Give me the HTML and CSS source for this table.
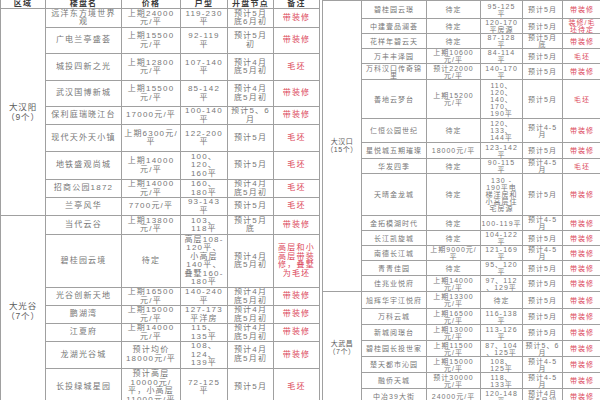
FILE: index.html
```html
<!DOCTYPE html>
<html lang="zh">
<head>
<meta charset="utf-8">
<link rel="stylesheet" href="styles.css">
</head>
<body>
<div class="page">
<table class="tbl left">
<colgroup><col class="l1"><col class="l2"><col class="l3"><col class="l4"><col class="l5"><col class="l6"></colgroup>
<tr class="head"><th>区域</th><th>楼盘名</th><th>价格</th><th>户型</th><th>开盘节点</th><th>备注</th></tr>
<tr class="h19"><td rowspan="9" class="region">大汉阳<br>（9个）</td><td>远洋东方境世界<br>观</td><td>上期24000<br>元/平</td><td>119-230<br>平</td><td>预计5月<br>底6月初</td><td class="red">带装修</td></tr>
<tr class="h26"><td>广电兰亭盛荟</td><td>上期15500<br>元/平</td><td>92-119<br>平</td><td>预计5月<br>初</td><td class="red">带装修</td></tr>
<tr class="h27"><td>城投四新之光</td><td>上期12800<br>元/平</td><td>107-140<br>平</td><td>预计4月<br>底5月初</td><td class="red">毛坯</td></tr>
<tr class="h26"><td>武汉国博新城</td><td>上期15500<br>元/平</td><td>85-142<br>平</td><td>预计4月<br>底5月初</td><td class="red">带装修</td></tr>
<tr class="h17"><td>保利庭瑞晓江台</td><td>17000元/平</td><td>100-140<br>平</td><td>预计5、6<br>月</td><td class="red">带装修</td></tr>
<tr class="h27"><td>现代天外天小镇</td><td>上期6300元/<br>平</td><td>122-200<br>平</td><td>预计5月</td><td class="red">毛坯</td></tr>
<tr class="h28"><td>地铁盛观尚城</td><td>上期14000<br>元/平</td><td>100、<br>120、<br>160平</td><td>预计5月</td><td class="red">毛坯</td></tr>
<tr class="h17"><td>招商公园1872</td><td>上期14000<br>元/平</td><td>160、<br>180平</td><td>预计4月<br>底5月初</td><td class="red">毛坯</td></tr>
<tr class="h18"><td>兰亭风华</td><td>7700元/平</td><td>93-143<br>平</td><td>预计5月</td><td class="red">毛坯</td></tr>
<tr class="h19 sep"><td rowspan="7" class="region">大光谷<br>（7个）</td><td>当代云谷</td><td>上期13800<br>元/平</td><td>103、<br>118平</td><td>预计5月<br>底</td><td class="red">带装修</td></tr>
<tr class="h53"><td>碧桂园云境</td><td>待定</td><td>高层108-<br>120平、<br>小高层<br>140平、<br>叠墅160-<br>180平</td><td>预计4月<br>底5月初</td><td class="red">高层和小<br>高层带装<br>修，叠墅<br>为毛坯</td></tr>
<tr class="h17"><td>光谷创新天地</td><td>上期16500<br>元/平</td><td>140-240<br>平</td><td>预计4月<br>底5月初</td><td class="red">带装修</td></tr>
<tr class="h18"><td>鹏湖湾</td><td>上期15000<br>元/平</td><td>127-173<br>平洋房</td><td>预计4月<br>底5月初</td><td class="red">带装修</td></tr>
<tr class="h18"><td>江夏府</td><td>上期14000<br>元/平</td><td>115、<br>135平</td><td>预计4月<br>底5月初</td><td class="red">带装修</td></tr>
<tr class="h26"><td>龙湖光谷城</td><td>预计均价<br>18000元/平</td><td>108、<br>124、<br>139平</td><td>预计4月<br>底5月初</td><td class="red">带装修</td></tr>
<tr class="h38"><td>长投绿城星园</td><td>预计高层<br>10000元/<br>平，小高层<br>11000元/平</td><td>72-125<br>平</td><td>预计5月</td><td class="red">毛坯</td></tr>
</table>

<table class="tbl right">
<colgroup><col class="r1"><col class="r2"><col class="r3"><col class="r4"><col class="r5"><col class="r6"></colgroup>
<tr class="h18"><td rowspan="15" class="region">大汉口<br>（15个）</td><td>碧桂园云璟</td><td>待定</td><td>95-125<br>平</td><td>预计5月</td><td class="red">带装修</td></tr>
<tr class="h15"><td>中建壹品澜荟</td><td>待定</td><td>120-170<br>平房源</td><td>预计5月</td><td class="red">装修/毛<br>坯待定</td></tr>
<tr class="h15"><td>花样年碧云天</td><td>待定</td><td>87-128<br>平</td><td>预计5月<br>底</td><td class="red">带装修</td></tr>
<tr class="h15"><td>万丰丰泽园</td><td>上期10600<br>元/平</td><td>84-114<br>平</td><td>预计5月</td><td class="red">毛坯</td></tr>
<tr class="h16"><td>万科汉口传奇锦<br>里</td><td>预计22000<br>元/平</td><td>140-170<br>平</td><td>预计5月</td><td class="red">带装修</td></tr>
<tr class="h39"><td>善地云梦台</td><td>上期15200<br>元/平</td><td>110、<br>120、<br>140、<br>170、<br>190平</td><td>预计5月</td><td class="red">毛坯</td></tr>
<tr class="h24"><td>仁恒公园世纪</td><td>待定</td><td>120、<br>133、<br>144平</td><td>预计4-5<br>月</td><td class="red">带装修</td></tr>
<tr class="h16"><td>星悦城五期璀璨</td><td>18000元/平</td><td>123-142<br>平</td><td>预计5月</td><td class="red">带装修</td></tr>
<tr class="h15"><td>华发四季</td><td>待定</td><td>90-115<br>平</td><td>预计4-5<br>月</td><td class="red">毛坯</td></tr>
<tr class="h42"><td>天晴金龙城</td><td>待定</td><td>130 -<br>190平电<br>梯洋房和<br>小高层住<br>宅房源</td><td>预计5月</td><td class="red">带装修</td></tr>
<tr class="h13"><td>金拓模湖时代</td><td>待定</td><td>100-119平</td><td>预计4-5<br>月</td><td class="red">带装修</td></tr>
<tr class="h14"><td>长江凯旋城</td><td>待定</td><td>104-122<br>平</td><td>预计5月</td><td class="red">带装修</td></tr>
<tr class="h15"><td>南德长江城</td><td>上期9000元/<br>平</td><td>121-169<br>平</td><td>预计4-5<br>月</td><td class="red">带装修</td></tr>
<tr class="h15"><td>青青佳园</td><td>待定</td><td>95、120<br>平</td><td>预计5月</td><td class="red">带装修</td></tr>
<tr class="h16"><td>佳兆业悦府</td><td>上期14000<br>元/平</td><td>97、112<br>、129平</td><td>预计5月</td><td class="red">带装修</td></tr>
<tr class="h17 sep"><td rowspan="7" class="region">大武昌<br>（7个）</td><td>旭辉华宇江悦府</td><td>上期13300<br>元/平</td><td>待定</td><td>预计5月</td><td class="red">带装修</td></tr>
<tr class="h16"><td>万科云城</td><td>上期16500<br>元/平</td><td>116-138<br>平</td><td>预计5月</td><td class="red">带装修</td></tr>
<tr class="h16"><td>新城阅璟台</td><td>上期13000<br>元/平</td><td>113-126<br>平</td><td>预计5月</td><td class="red">带装修</td></tr>
<tr class="h16"><td>碧桂园长投世家</td><td>上期11500<br>元/平</td><td>87、104<br>、125平</td><td>预计5、6<br>月</td><td class="red">带装修</td></tr>
<tr class="h16"><td>楚天都市沁园</td><td>上期15000<br>元/平</td><td>108、<br>125平</td><td>预计4-5<br>月</td><td class="red">带装修</td></tr>
<tr class="h16"><td>融侨天城</td><td>预计30000<br>元/平</td><td>118、<br>133平</td><td>预计4-5<br>月</td><td class="red">带装修</td></tr>
<tr class="h16"><td>中冶39大街</td><td>24000元/平</td><td>120-148<br>平</td><td>预计4月<br>底5月初</td><td class="red">带装修</td></tr>
</table>
</div>
</body>
</html>
```

FILE: styles.css
```css
html, body {
  margin: 0;
  padding: 0;
  background: #ffffff;
}
body {
  width: 600px;
  height: 400px;
  overflow: hidden;
  font-family: "Liberation Sans", "Noto Sans CJK SC", sans-serif;
  color: #777777;
}
.page {
  display: flex;
  align-items: flex-start;
  gap: 2px;
  width: 600px;
  height: 400px;
  overflow: hidden;
}
.tbl {
  border-collapse: collapse;
  table-layout: fixed;
  flex: none;
}
.tbl th,
.tbl td {
  border: 1px solid #a0a0a0;
  padding: 0;
  text-align: center;
  vertical-align: middle;
  white-space: nowrap;
  overflow: hidden;
}
.left {
  width: 319px;
  margin-top: -1px;
  font-size: 8px;
  line-height: 8.5px;
  letter-spacing: 1.2px;
}
.right {
  width: 279px;
  font-size: 7px;
  line-height: 7px;
  letter-spacing: 1px;
}
.l1 { width: 45px; }
.l2 { width: 76px; }
.l3 { width: 59px; }
.l4 { width: 47px; }
.l5 { width: 46px; }
.l6 { width: 46px; }
.r1 { width: 39px; }
.r2 { width: 65px; }
.r3 { width: 54px; }
.r4 { width: 42px; }
.r5 { width: 40px; }
.r6 { width: 39px; }
.head { height: 9px; }
.head th {
  font-size: 8px;
  line-height: 8px;
  font-weight: bold;
  color: #3a3a3a;
}
.left .region {
  font-size: 8.5px;
  line-height: 10px;
  letter-spacing: 0.8px;
  color: #5a5a5a;
}
.right .region {
  line-height: 8px;
  letter-spacing: 0.5px;
  color: #5a5a5a;
}
.red { color: #dc4a5c; }
.sep td { border-top-color: #6a6a6a; }
.h13 { height: 13px; }
.h14 { height: 14px; }
.h15 { height: 15px; }
.h16 { height: 16px; }
.h17 { height: 17px; }
.h18 { height: 18px; }
.h19 { height: 19px; }
.h24 { height: 24px; }
.h26 { height: 26px; }
.h27 { height: 27px; }
.h28 { height: 28px; }
.h38 { height: 38px; }
.h39 { height: 39px; }
.h42 { height: 42px; }
.h53 { height: 53px; }
```
